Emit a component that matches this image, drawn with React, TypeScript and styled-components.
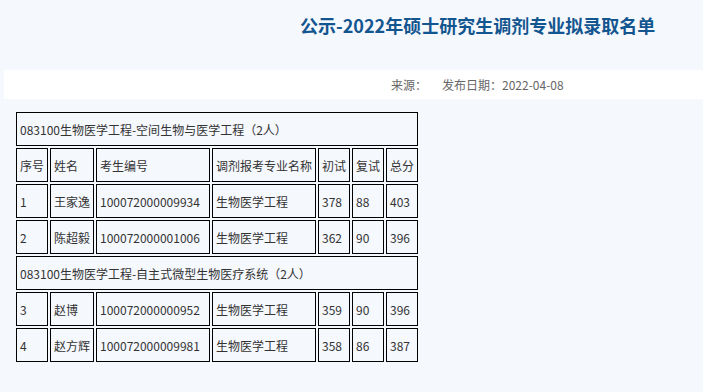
import { Fragment } from "react";
import styled, { createGlobalStyle } from "styled-components";

const GlobalStyle = createGlobalStyle`
  html, body {
    margin: 0;
    padding: 0;
    background: #f5f8fd;
  }
  body {
    font-family: "Noto Sans CJK SC", "Noto Sans", sans-serif;
  }
`;

const Page = styled.div`
  width: 703px;
  height: 392px;
  background: #f5f8fd;
  overflow: hidden;
`;

const Header = styled.div`
  height: 70px;
  padding-left: 300px;
  box-sizing: border-box;
  display: flex;
  align-items: flex-start;
`;

const Title = styled.h1`
  margin: 12px 0 0;
  font-size: 18px;
  line-height: 26px;
  font-weight: 700;
  color: #13558f;
  white-space: nowrap;
`;

const InfoBar = styled.div`
  margin-left: 4px;
  height: 29px;
  background: #fff;
  display: flex;
  align-items: center;
  padding-left: 387px;
  gap: 15px;
  font-size: 12px;
  color: #666;
`;

const Table = styled.table`
  margin: 11px 0 0 14px;
  border-collapse: separate;
  border-spacing: 2px;
  table-layout: fixed;
  font-size: 12px;
  color: #333;
`;

const Cell = styled.td<{ w?: number }>`
  box-sizing: border-box;
  ${({ w }) => (w ? `width: ${w}px;` : "")}
  height: 34px;
  padding: 0 0 0 3px;
  border: 1px solid #000;
  text-align: left;
  vertical-align: middle;
  white-space: nowrap;
  overflow: hidden;
`;

const widths = [32, 44, 114, 104, 32, 32, 32];
const heads = ["序号", "姓名", "考生编号", "调剂报考专业名称", "初试", "复试", "总分"];

const groups = [
  {
    name: "083100生物医学工程-空间生物与医学工程（2人）",
    rows: [
      ["1", "王家逸", "100072000009934", "生物医学工程", "378", "88", "403"],
      ["2", "陈超毅", "100072000001006", "生物医学工程", "362", "90", "396"],
    ],
  },
  {
    name: "083100生物医学工程-自主式微型生物医疗系统（2人）",
    rows: [
      ["3", "赵博", "100072000000952", "生物医学工程", "359", "90", "396"],
      ["4", "赵方辉", "100072000009981", "生物医学工程", "358", "86", "387"],
    ],
  },
];

export default function App() {
  return (
    <Page>
      <GlobalStyle />
      <Header>
        <Title>公示-2022年硕士研究生调剂专业拟录取名单</Title>
      </Header>
      <InfoBar>
        <span>来源：</span>
        <span>发布日期：2022-04-08</span>
      </InfoBar>
      <Table>
        <tbody>
          {groups.map((g, gi) => (
            <Fragment key={g.name}>
              <tr>
                <Cell colSpan={7}>{g.name}</Cell>
              </tr>
              {gi === 0 && (
                <tr>
                  {heads.map((h, i) => (
                    <Cell key={h} w={widths[i]}>
                      {h}
                    </Cell>
                  ))}
                </tr>
              )}
              {g.rows.map((r) => (
                <tr key={r[0]}>
                  {r.map((v, i) => (
                    <Cell key={i} w={widths[i]}>
                      {v}
                    </Cell>
                  ))}
                </tr>
              ))}
            </Fragment>
          ))}
        </tbody>
      </Table>
    </Page>
  );
}
